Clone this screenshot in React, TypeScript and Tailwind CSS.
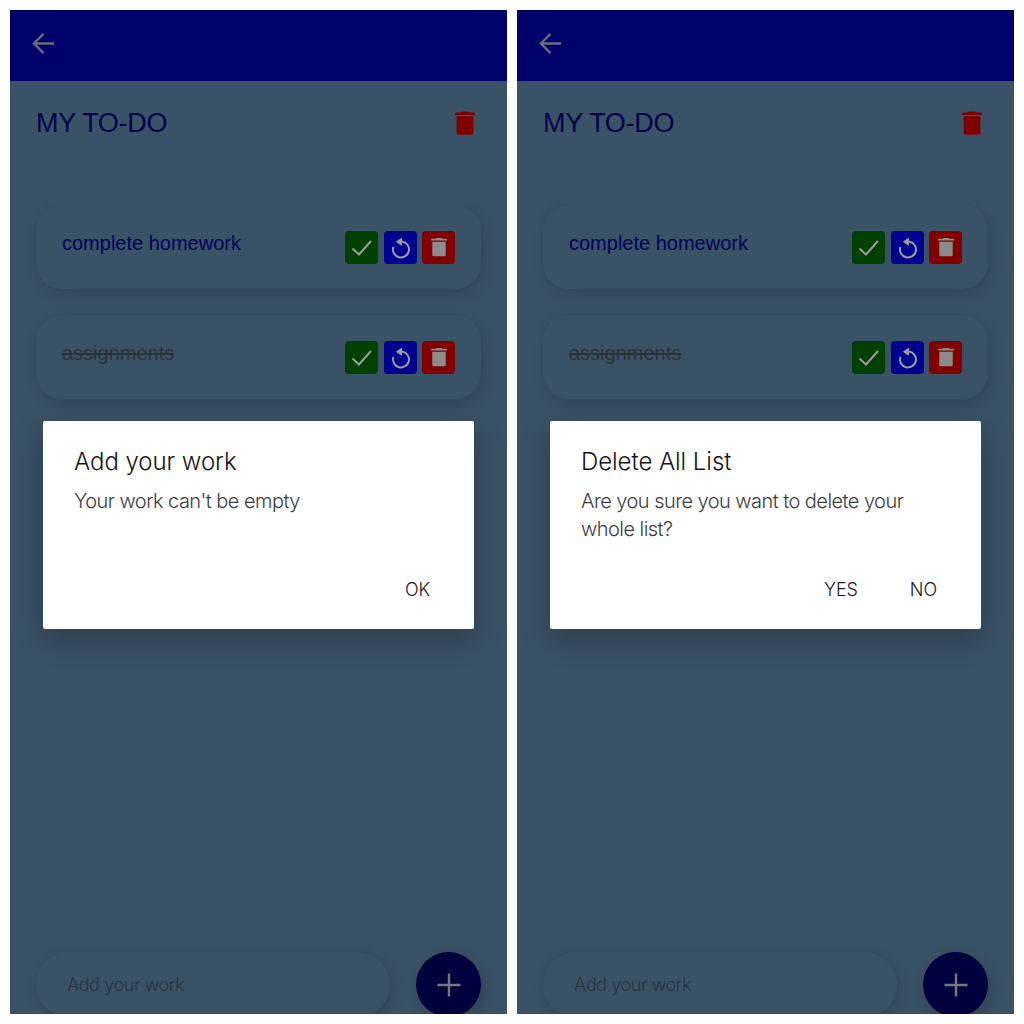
import React from "react";

function Trash({ className, fill }: { className?: string; fill: string }) {
  return (
    <svg viewBox="0 0 20 24" className={className} fill={fill}>
      <path d="M7 0.600h6c.6 0 1 .4 1.100 1h4.900c.6 0 1 .4 1 .9V4H0V2.500c0-.5.4-.9 1-.9h4.900C6 1 6.400 .6 7 .6z" />
      <path d="M1.600 5.300h16.800v16.400c0 1.200-.9 2-2 2H3.600c-1.100 0-2-.8-2-2z" />
    </svg>
  );
}

function Check() {
  return (
    <svg viewBox="0 0 33 33" className="w-[33px] h-[33px]" fill="none" stroke="#9c9c9c" strokeWidth="2">
      <path d="M7.500 17.500l6.500 6L26 10" />
    </svg>
  );
}

function Undo() {
  return (
    <svg viewBox="0 0 33 33" className="w-[33px] h-[33px]" fill="none">
      <path d="M18 10.500a8 8 0 1 1-8.600 5.400" stroke="#9c9c9c" strokeWidth="2" />
      <path d="M18 6.500v8.500l-6.200-4.250z" fill="#9c9c9c" />
    </svg>
  );
}

function Actions() {
  return (
    <div className="flex gap-[5.500px]">
      <div className="w-[33px] h-[33px] rounded-[4px] bg-[#004000]"><Check /></div>
      <div className="w-[33px] h-[33px] rounded-[4px] bg-[#000090]"><Undo /></div>
      <div className="w-[33px] h-[33px] rounded-[4px] bg-[#800000] flex items-center justify-center">
        <Trash className="w-[16px] h-[20px]" fill="#8c8c8c" />
      </div>
    </div>
  );
}

function Card({ text, done }: { text: string; done?: boolean }) {
  return (
    <div className="h-[84px] rounded-[26px] bg-[#3a5265] shadow-[3px_5px_14px_rgba(0,0,0,0.14),-1px_-1px_6px_rgba(0,0,0,0.04)] px-[26px] flex items-center justify-between">
      <span
        className={
          done
            ? "font-['Liberation_Sans',sans-serif] text-[20px] mb-[8px] line-through text-[#2c3338]"
            : "font-['Liberation_Sans',sans-serif] text-[20px] mb-[8px] text-[#00005c]"
        }
      >
        {text}
      </span>
      <Actions />
    </div>
  );
}

function Panel({ children }: { children: React.ReactNode }) {
  return (
    <div className="relative w-[497px] h-[1004px] overflow-hidden bg-[#3a5265] flex flex-col">
      <div className="h-[71px] shrink-0 bg-[#00006a] flex items-center pl-[22px] pb-[4px]">
        <svg viewBox="0 0 24 24" className="w-[23px] h-[23px]" fill="none" stroke="#6f6a78" strokeWidth="2.400">
          <path d="M23 12H2M12 2L2 12l10 10" />
        </svg>
      </div>
      <div className="flex-1 flex flex-col px-[26px]">
        <div className="h-[84px] shrink-0 flex items-center justify-between pr-[6px]">
          <span className="font-['Liberation_Sans',sans-serif] text-[27px] text-[#00004f] tracking-[-0.3px]">MY TO-DO</span>
          <Trash className="w-[20px] h-[24px]" fill="#800000" />
        </div>
        <div className="mt-[40px] flex flex-col gap-[26px]">
          <Card text="complete homework" />
          <Card text="assignments" done />
        </div>
        <div className="mt-auto -mb-[3px] flex items-center gap-[26px]">
          <div className="w-[354px] h-[65px] rounded-full bg-[#3a5265] shadow-[3px_5px_14px_rgba(0,0,0,0.14),-1px_-1px_6px_rgba(0,0,0,0.04)] pl-[31px] flex items-center">
            <span className="text-[18px] font-light tracking-[-0.4px] text-[#27343f]">Add your work</span>
          </div>
          <div className="w-[65px] h-[65px] rounded-full bg-[#00003c] shadow-[3px_5px_14px_rgba(0,0,0,0.2)] flex items-center justify-center">
            <svg viewBox="0 0 24 24" className="w-[24px] h-[24px]" fill="none" stroke="#77777f" strokeWidth="2.400">
              <path d="M12 0.500v23M0.500 12h23" />
            </svg>
          </div>
        </div>
      </div>
      {children}
    </div>
  );
}

function Dialog({
  title,
  body,
  actions,
}: {
  title: string;
  body: string;
  actions: string[];
}) {
  return (
    <div className="absolute left-[33px] top-[411px] w-[431px] h-[208px] rounded-[2px] bg-white shadow-[0_10px_28px_rgba(0,0,0,0.25)] flex flex-col pl-[32px] pr-[29px]">
      <div className="mt-[23px] text-[24px] leading-[36px] font-light tracking-[-0.05px] text-[#141414] -ml-[1px]">{title}</div>
      <div className="mt-[7px] text-[20px] leading-[28px] font-light tracking-[-0.55px] text-[#3c3c3c] -ml-[1px]">{body}</div>
      <div className="mt-auto mb-[28px] flex justify-end gap-[52px] pr-[15px] text-[18px] leading-[22px] font-light tracking-[-0.1px] text-[#1a1a1a]">
        {actions.map((a) => (
          <span key={a}>{a}</span>
        ))}
      </div>
    </div>
  );
}

export default function App() {
  return (
    <div className="w-[1024px] h-[1024px] bg-white p-[10px] flex gap-[10px] font-['Inter','Liberation_Sans',sans-serif]">
      <Panel>
        <Dialog title="Add your work" body="Your work can't be empty" actions={["OK"]} />
      </Panel>
      <Panel>
        <Dialog
          title="Delete All List"
          body="Are you sure you want to delete your whole list?"
          actions={["YES", "NO"]}
        />
      </Panel>
    </div>
  );
}
